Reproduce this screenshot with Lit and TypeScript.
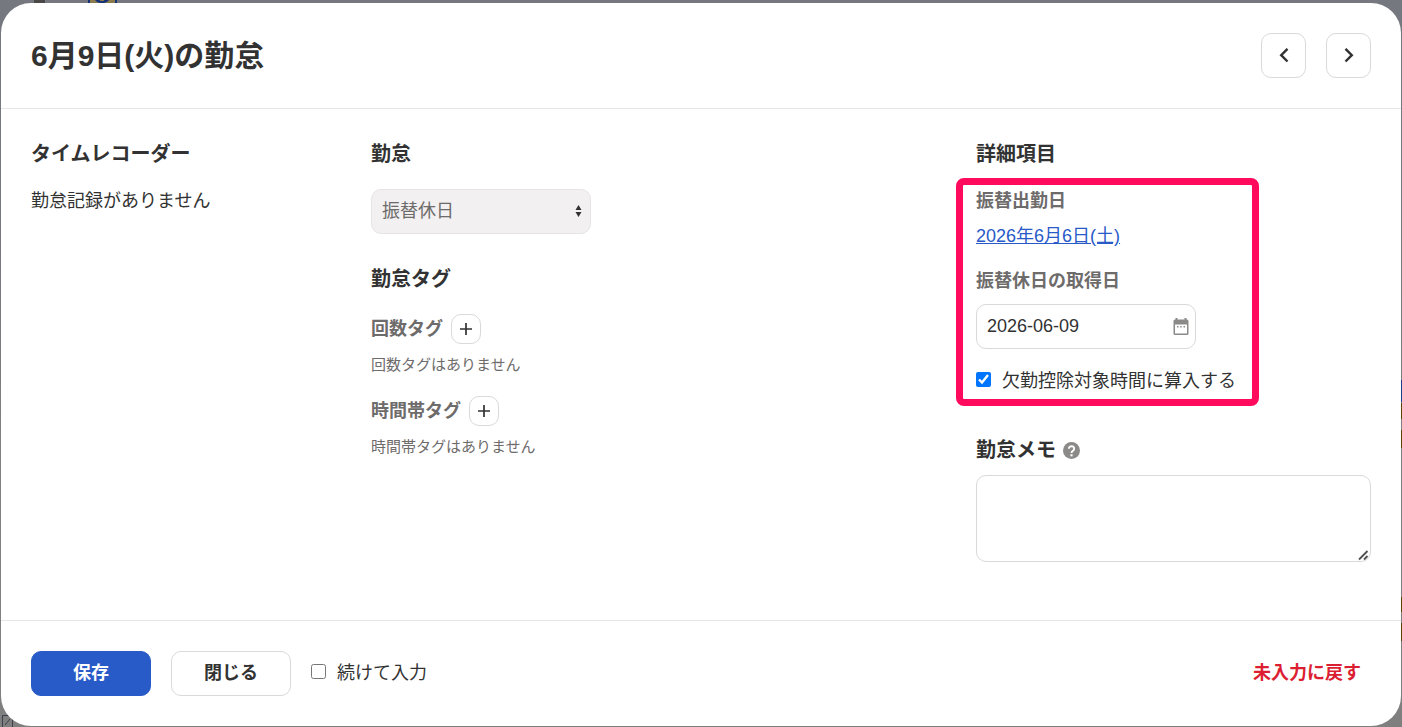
import { LitElement, html, css, svg } from "lit";
import { customElement, state } from "lit/decorators.js";

const plus = svg`<path d="M7 1v12M1 7h12" stroke="currentColor" stroke-width="1.7" fill="none"/>`;

@customElement("app-root")
export class AppRoot extends LitElement {
  @state() private deduct = true;
  @state() private continueInput = false;

  static styles = css`
    :host {
      display: block;
      font-family: "Liberation Sans", "Noto Sans CJK JP", sans-serif;
      font-size: 18px;
      line-height: 25px;
      color: #323232;
    }
    * {
      box-sizing: border-box;
    }
    button,
    input,
    select,
    textarea {
      font: inherit;
      color: inherit;
      margin: 0;
    }
    button {
      cursor: pointer;
      padding: 0;
      background: #fff;
      border: 1px solid #d9d9d9;
    }
    h1,
    h2,
    h3,
    p {
      margin: 0;
    }
    svg {
      display: block;
    }
    .backdrop {
      position: relative;
      display: flex;
      min-height: 100vh;
      padding: 3px 1px 1px;
      background: linear-gradient(#76787f, #76787f 30%, #7f7f7f 60%, #7f7f7f);
    }
    .behind {
      position: absolute;
    }
    .behind-top {
      left: 0;
      top: 0;
    }
    .behind-bottom {
      left: 0;
      bottom: 0;
    }
    .behind-right {
      right: 0;
      top: 380px;
    }
    .dialog {
      position: relative;
      flex: 1;
      display: flex;
      flex-direction: column;
      min-width: 0;
      background: #fff;
      border-radius: 30px;
    }
    .head,
    .foot {
      display: flex;
      align-items: center;
      gap: 20px;
      padding: 30px;
    }
    .head {
      border-bottom: 1px solid #e6e6e6;
    }
    .foot {
      border-top: 1px solid #e6e6e6;
    }
    h1 {
      flex: 1;
      font-size: 30px;
      line-height: 45px;
    }
    h2 {
      font-size: 20px;
      line-height: 30px;
    }
    h3,
    .label {
      font-size: 18px;
      line-height: 25px;
      font-weight: 700;
      color: #6e6b6b;
    }
    .nav {
      display: grid;
      place-items: center;
      width: 45px;
      height: 45px;
      border-radius: 10px;
    }
    .body {
      flex: 1;
      display: grid;
      grid-template-columns: 300px 1fr 395px;
      gap: 40px;
      padding: 30px;
    }
    .column {
      display: flex;
      flex-direction: column;
      gap: 30px;
    }
    .section {
      display: flex;
      flex-direction: column;
      align-items: flex-start;
      gap: 20px;
    }
    .select {
      display: grid;
      align-items: center;
      width: 220px;
    }
    .select > *,
    .date > * {
      grid-area: 1 / 1;
    }
    .select svg {
      justify-self: end;
      margin-right: 8px;
      pointer-events: none;
    }
    select {
      appearance: none;
      width: 100%;
      height: 45px;
      padding: 0 10px;
      border: 1px solid #e6e4e4;
      border-radius: 10px;
      background: #f2f0f0;
      color: #6e6b6b;
      opacity: 1;
    }
    .tag {
      display: flex;
      flex-direction: column;
      gap: 10px;
    }
    .tag-head {
      display: flex;
      align-items: center;
      gap: 8px;
    }
    .add {
      display: grid;
      place-items: center;
      width: 30px;
      height: 30px;
      border-radius: 10px;
    }
    .note {
      font-size: 15px;
      line-height: 22px;
      color: #6e6b6b;
    }
    .details {
      position: relative;
      display: flex;
      flex-direction: column;
      align-items: flex-start;
      gap: 20px;
    }
    .highlight {
      position: absolute;
      inset: -11px auto -12px -20px;
      width: 303px;
      border: 7px solid #ff0a5c;
      border-radius: 8px;
      pointer-events: none;
    }
    .field {
      display: flex;
      flex-direction: column;
      align-items: flex-start;
      gap: 10px;
    }
    a {
      color: #285ac8;
      text-decoration: underline;
    }
    .date {
      display: grid;
      align-items: center;
      width: 220px;
    }
    .date input {
      width: 100%;
      height: 45px;
      padding: 0 40px 0 10px;
      border: 1px solid #d9d9d9;
      border-radius: 10px;
      background: #fff;
    }
    .icon-button {
      border: 0;
      background: none;
    }
    .date .icon-button {
      justify-self: end;
      margin-right: 6px;
      color: #8c8989;
    }
    .check {
      display: flex;
      align-items: flex-start;
      gap: 11px;
    }
    .check input {
      width: 15px;
      height: 15px;
      margin-top: 3px;
      accent-color: #0075ff;
    }
    .memo {
      padding-top: 11px;
      gap: 10px;
      align-items: stretch;
    }
    .memo-head {
      display: flex;
      align-items: center;
      gap: 7px;
    }
    textarea {
      display: block;
      width: 100%;
      height: 87px;
      padding: 10px;
      border: 1px solid #d9d9d9;
      border-radius: 10px;
      resize: vertical;
    }
    textarea::-webkit-resizer {
      background: url("data:image/svg+xml,%3Csvg xmlns='http://www.w3.org/2000/svg' width='15' height='15'%3E%3Cpath d='M4 13.5 12.500 5M9 13.500l3.500-3.500' stroke='%23505050' stroke-width='1.8' fill='none'/%3E%3C/svg%3E")
        no-repeat right bottom;
    }
    .action {
      width: 120px;
      height: 45px;
      border-radius: 10px;
      font-weight: 700;
    }
    .primary {
      background: #285ac8;
      border-color: #285ac8;
      color: #fff;
    }
    .reset {
      margin-left: auto;
      padding: 0 10px;
      border: 0;
      background: none;
      color: #dc1e32;
      font-weight: 700;
    }
  `;

  private renderTag(name: string) {
    return html`
      <div class="tag">
        <div class="tag-head">
          <h3>${name}</h3>
          <button class="add" type="button" aria-label="${name}を追加">
            <svg width="14" height="14" viewBox="0 0 14 14">${plus}</svg>
          </button>
        </div>
        <p class="note">${name}はありません</p>
      </div>
    `;
  }

  render() {
    return html`
      <div class="backdrop">
        <svg class="behind behind-top" width="130" height="3" aria-hidden="true">
          <rect x="34" width="11" height="3" fill="#4a4747" />
          <rect x="88" width="29" height="3" fill="#163378" />
          <rect x="90" width="25" height="3" fill="#8b7a4c" />
          <path d="M95 0h14l-2 2-3 1h-4l-3-1z" fill="#163378" />
          <rect x="100" width="4" height="1" fill="#8b7a4c" />
        </svg>
        <svg class="behind behind-bottom" width="16" height="12" fill="none" stroke="#3c414d" aria-hidden="true">
          <path d="M2.5 12V.5h10V12M5 10l5-6" />
        </svg>
        <svg class="behind behind-right" width="1" height="262" aria-hidden="true">
          <rect width="1" height="22" fill="#1c3f8c" />
          <path d="M0 23h1v16H0zM0 50h1v18H0zM0 217h1v15H0zM0 243h1v18H0z" fill="#5a4300" />
        </svg>
        <main class="dialog" role="dialog" aria-labelledby="title">
          <header class="head">
            <h1 id="title">6月9日(火)の勤怠</h1>
            <button class="nav" type="button" aria-label="前日">
              <svg width="16" height="16" viewBox="0 0 16 16" fill="none" stroke="currentColor" stroke-width="2.4">
                <path d="M11.500 .8 5.200 7.200l6.300 6.300" />
              </svg>
            </button>
            <button class="nav" type="button" aria-label="翌日">
              <svg width="16" height="16" viewBox="0 0 16 16" fill="none" stroke="currentColor" stroke-width="2.4">
                <path d="M4.500 .8 10.800 7.200 4.500 13.500" />
              </svg>
            </button>
          </header>

          <div class="body">
            <section class="section">
              <h2>タイムレコーダー</h2>
              <p>勤怠記録がありません</p>
            </section>

            <div class="column">
              <section class="section">
                <h2 id="kind">勤怠</h2>
                <div class="select">
                  <select aria-labelledby="kind" disabled>
                    <option>振替休日</option>
                  </select>
                  <svg width="8" height="13" viewBox="0 0 8 13" fill="#323232" aria-hidden="true">
                    <path d="M3.500 0 6.500 5h-6zM3.500 12l3-5h-6z" />
                  </svg>
                </div>
              </section>
              <section class="section">
                <h2>勤怠タグ</h2>
                ${this.renderTag("回数タグ")} ${this.renderTag("時間帯タグ")}
              </section>
            </div>

            <div class="column">
              <section class="section">
                <h2>詳細項目</h2>
                <div class="details">
                  <div class="field">
                    <h3>振替出勤日</h3>
                    <a href="#2026-06-06">2026年6月6日(土)</a>
                  </div>
                  <div class="field">
                    <label class="label" for="date">振替休日の取得日</label>
                    <div class="date">
                      <input id="date" type="text" value="2026-06-09" />
                      <button class="icon-button" type="button" aria-label="カレンダーを開く">
                        <svg width="18" height="18" viewBox="0 0 18 18">
                          <path
                            fill="currentColor"
                            fill-rule="evenodd"
                            d="M3.500 0h2v1.500h7V0h2v1.500h.5a1.500 1.500 0 0 1 1.500 1.500v12.500a1.500 1.500 0 0 1-1.500 1.500H3a1.500 1.500 0 0 1-1.500-1.500V3A1.500 1.500 0 0 1 3 1.500h.5zM3 6.500v9h12v-9zM5 8h1.500v1.500H5zM8.200 8h1.500v1.500H8.200zM11.500 8H13v1.500h-1.500z"
                          />
                        </svg>
                      </button>
                    </div>
                  </div>
                  <label class="check">
                    <input
                      type="checkbox"
                      .checked=${this.deduct}
                      @change=${(e: Event) => (this.deduct = (e.target as HTMLInputElement).checked)}
                    />
                    <span>欠勤控除対象時間に算入する</span>
                  </label>
                  <div class="highlight"></div>
                </div>
              </section>
              <section class="section memo">
                <div class="memo-head">
                  <h2><label for="memo">勤怠メモ</label></h2>
                  <button class="icon-button" type="button" aria-label="ヘルプ">
                    <svg width="17" height="17" viewBox="0 0 16 16">
                      <circle cx="8" cy="8" r="8" fill="#8c8989" />
                      <path d="M5.500 6.300a2.500 2.300 0 1 1 4 1.800Q8 9 8 10.300" fill="none" stroke="#fff" stroke-width="1.800" />
                      <rect x="7" y="11.500" width="2" height="2" fill="#fff" />
                    </svg>
                  </button>
                </div>
                <textarea id="memo"></textarea>
              </section>
            </div>
          </div>

          <footer class="foot">
            <button class="action primary" type="button">保存</button>
            <button class="action" type="button">閉じる</button>
            <label class="check">
              <input
                type="checkbox"
                .checked=${this.continueInput}
                @change=${(e: Event) => (this.continueInput = (e.target as HTMLInputElement).checked)}
              />
              <span>続けて入力</span>
            </label>
            <button class="reset" type="button">未入力に戻す</button>
          </footer>
        </main>
      </div>
    `;
  }
}
